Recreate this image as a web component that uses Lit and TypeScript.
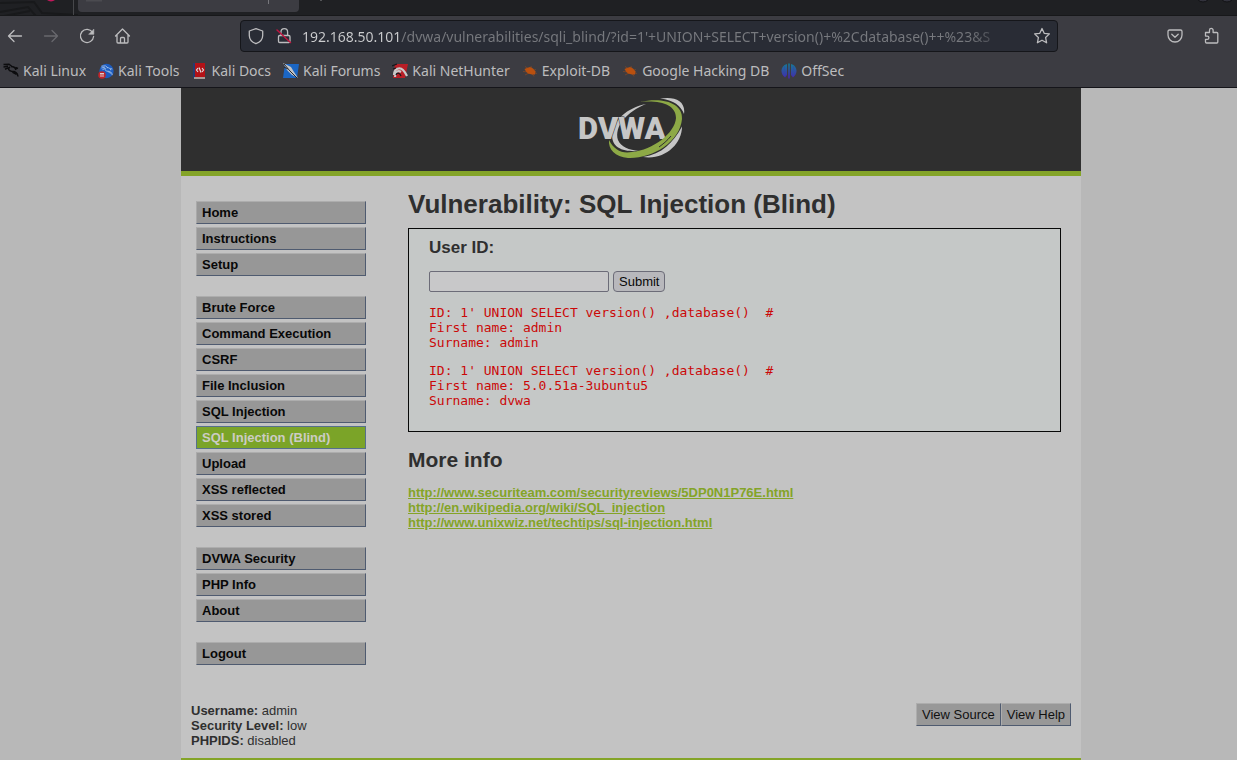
import { LitElement, html, css, svg } from "lit";
import { customElement, property } from "lit/decorators.js";

const dragon = svg`<path d="M0.500 1.500 6 1.200 9 3.500M0.500 4 5 3.200M2 6.200 5.500 4.600M7 4C4.500 5.500 5.500 8 8.500 8.200 12 8.200 14.500 9.500 15 13.500M8 3.500c3 0 4.500 1 5 3.500M12.500 4.500l2.500 1M9 8.300c1 2 3.500 1.700 4.500 3.200"/>`;

const bug = svg`<path d="M2.500 6 5 5l3-1 3 1.500 2.500 3L13 11.500 10 11.500 6 10.500 4 8.500Z" fill="#b9500f"/><path d="M3 3.500 7 6M1 8.500l5 .5M3 12l4-2M9 3l1 4M14 6.500l-4 1M15 10.500l-4-1M12 13.500l-2-3" stroke="#b9500f" stroke-width=".6" stroke-opacity=".7" fill="none"/>`;

const bookmarks = [
  { name: "Kali Linux", icon: svg`<g fill="none" stroke="#0c0c0e" stroke-width="1.500">${dragon}</g>` },
  {
    name: "Kali Tools",
    icon: svg`<circle cx="8.500" cy="8" r="7.200" fill="#1c5cc0"/><g fill="none" stroke="#a9c3e6" stroke-width="1.200" transform="translate(3 2) scale(.75)">${dragon}</g><circle cx="4" cy="12" r="3.800" fill="#c0252b"/><path d="M2 10.500h4M3 10.500v3.500M5 10.500v3.500" stroke="#ddd" stroke-width=".9" fill="none"/>`,
  },
  {
    name: "Kali Docs",
    icon: svg`<path d="M2 0h11v14H2z" fill="#b31217"/><path d="M1 0h2v15H1z" fill="#263c70"/><path d="M2 14h11v2H2z" fill="#a89a96"/><path d="M6 5 4.500 7 6 9M10 5l1.500 2L10 9M7 4.500l2 5" stroke="#ddd" stroke-width="1.200" fill="none"/>`,
  },
  {
    name: "Kali Forums",
    icon: svg`<path d="M2 1h14l-2 14H0Z" fill="#1b66c4"/><path d="M0 0 8 4l3 5 4 6-6-3-5-5Z" fill="#c3c5c8"/><path d="m1 1 6 7 7 7M1 4l4 2" stroke="#24262c" fill="none"/>`,
  },
  {
    name: "Kali NetHunter",
    icon: svg`<path d="M3 1h13l-3 14H1Z" fill="#b81e26"/><path d="M2 12C2 5 8 4 11 7c2 2 3 4 4 6M3 14c0-5 3-7 6-5" stroke="#c9c9c9" stroke-width="2.200" fill="none"/><path d="M0 3 5 1M1 6l3-1M4 12c1-3 4-2 5 1" stroke="#15161a" stroke-width="1.200" fill="none"/>`,
  },
  { name: "Exploit-DB", icon: bug },
  { name: "Google Hacking DB", icon: bug },
  {
    name: "OffSec",
    icon: svg`<defs><linearGradient id="os" gradientUnits="userSpaceOnUse" x1="0" y1="0" x2="0" y2="16"><stop offset="0" stop-color="#127f93"/><stop offset="1" stop-color="#4a1fb0"/></linearGradient></defs><path d="M6 1C-1 3-1 11 4 14.500L6 12ZM10 1c7 2 7 10 2 13.500L10 12ZM7.200.500h1.600v15H7.200Z" fill="url(#os)"/><path d="M3.500 3v10M12.500 3v10" stroke="#2d4ba5" stroke-width=".6"/>`,
  },
];

const menu = [
  ["Home", "Instructions", "Setup"],
  ["Brute Force", "Command Execution", "CSRF", "File Inclusion", "SQL Injection", "SQL Injection (Blind)", "Upload", "XSS reflected", "XSS stored"],
  ["DVWA Security", "PHP Info", "About"],
  ["Logout"],
];

@customElement("browser-chrome")
class BrowserChrome extends LitElement {
  static styles = css`
    :host { display: block; background: #3c3c42; color: #bcbcbe; font: 14px/20px "Noto Sans", sans-serif; border-bottom: 1px solid #15151a; }
    * { box-sizing: border-box; }
    svg { display: block; flex: none; }
    button { padding: 0; border: 0; background: none; color: inherit; font: inherit; }
    .tabs { height: 16px; display: flex; background: #1f2023; border-bottom: 1px solid #17181a; overflow: hidden; }
    .art { width: 78px; height: 16px; }
    .tab { width: 221px; height: 12px; border-radius: 0 0 4px 4px; background: #3c3c42; }
    .rest { width: 120px; height: 16px; }
    .winbtns { margin-left: auto; width: 50px; height: 16px; }
    .bar { display: flex; align-items: center; padding: 4px 17px 4px 6px; }
    .nav { display: flex; gap: 18px; flex: none; width: 234px; }
    .dim { color: #68686d; }
    .url { display: flex; align-items: center; flex: 0 1 818px; min-width: 0; height: 32px; padding: 0 6px; border: 1px solid #15161a; border-radius: 4px; background: #292c35; }
    .url svg { margin-right: 10px; }
    .url .star svg { margin: 0; }
    .url input {
      flex: 1; min-width: 0; height: 24px; margin: 0 6px 0 -1px; padding: 0; border: 0; outline: 0; font: inherit; color: transparent;
      background: linear-gradient(to right, #cccdcf 99px, #77797e 99px, #77797e calc(100% - 60px), transparent calc(100% - 16px));
      -webkit-background-clip: text; background-clip: text;
    }
    .tools { display: flex; gap: 18px; margin-left: auto; }
    .marks { display: flex; gap: 12px; padding: 5px 3px 6px; }
    .marks a { display: flex; align-items: center; gap: 4px; color: inherit; text-decoration: none; white-space: nowrap; }
    .line { fill: none; stroke: currentColor; stroke-width: 1.300; stroke-linecap: round; stroke-linejoin: round; }
  `;

  render() {
    const icon = (body: unknown) => html`<svg class="line" width="18" height="18" viewBox="0 0 18 18" aria-hidden="true">${body}</svg>`;
    return html`
      <div class="tabs">
        <svg class="art" viewBox="0 0 78 16"><path d="M0 3 34 2 42 13 78 15M0 12 28 7 36 16M4 16l26-5" stroke="#18191b" stroke-width="2" fill="none"/><circle cx="51" cy="-4.500" r="6" fill="#c2185b"/><path d="M73.500 0v16" stroke="#46474a"/></svg>
        <svg class="tab" viewBox="0 0 221 12"><path d="M8 0h16v1.500H8z" fill="#4b4b50"/><path d="M190.500 0v4" stroke="#77777c"/></svg>
        <svg class="rest" viewBox="0 0 120 16"><path d="M22 0v1" stroke="#88888c"/></svg>
        <svg class="winbtns" viewBox="0 0 50 16"><g fill="#32323c" stroke="#121215"><circle cx="16" cy="-5" r="7"/><circle cx="40" cy="-5" r="7"/></g></svg>
      </div>
      <div class="bar">
        <div class="nav">
          <button aria-label="Back">${icon(svg`<path d="M15.500 9H2.500M8 3.500 2.500 9 8 14.500"/>`)}</button>
          <button class="dim" aria-label="Forward">${icon(svg`<path d="M2.500 9h13M10 3.500 15.500 9 10 14.500"/>`)}</button>
          <button aria-label="Reload">${icon(svg`<path d="M14.500 5.200A6.600 6.600 0 1 0 15.600 9.500"/><path d="M15.800 2.500v4.800H11Z" fill="currentColor" stroke-width=".6"/>`)}</button>
          <button aria-label="Home">${icon(svg`<path d="M1.500 9 8.500 2l7 7M3 7.800v7.200q0 1 1 1h9q1 0 1-1V7.800M6.500 16v-4.500q0-1 1-1h2q1 0 1 1V16"/>`)}</button>
        </div>
        <div class="url">
          ${icon(svg`<path d="M9 1.600 15.700 4v4.500c0 4-3 6.800-6.700 8.200-3.700-1.400-6.700-4.200-6.700-8.200V4Z"/>`)}
          ${icon(svg`<path d="M6 8V5a3.300 3.300 0 0 1 6.600 0v3M4.700 8.500h9.100q1.200 0 1.200 1.200v4.600q0 1.200-1.200 1.200H4.700q-1.200 0-1.200-1.200V9.700q0-1.200 1.200-1.200Z"/><path d="M2 3 15.500 15.500" stroke="#c0143f" stroke-width="1.500"/>`)}
          <input aria-label="Address" value="192.168.50.101/dvwa/vulnerabilities/sqli_blind/?id=1'+UNION+SELECT+version()+%2Cdatabase()++%23&amp;S" />
          <button class="star" aria-label="Bookmark this page">${icon(svg`<path d="m9 1.500 2.200 4.800 5.200.6-3.800 3.600 1 5.300L9 13.200l-4.600 2.600 1-5.300L1.600 6.900l5.200-.6Z"/>`)}</button>
        </div>
        <div class="tools">
          <button aria-label="Save to Pocket">${icon(svg`<path d="M3.500 3h11q1.500 0 1.500 1.500V8a7 7 0 0 1-14 0V4.500Q2 3 3.500 3ZM5.800 7.200 9 10.300l3.200-3.100"/>`)}</button>
          <button aria-label="Extensions">${icon(svg`<path d="M3.500 5.500h4V3.200a1.800 1.800 0 0 1 3.600 0v2.300h3.700q1 0 1 1v8.500q0 1-1 1H4.500q-1 0-1-1V12.300h1.800a1.600 1.600 0 0 0 0-3.200H3.500Z"/>`)}</button>
        </div>
      </div>
      <nav class="marks" aria-label="Bookmarks">
        ${bookmarks.map((b) => html`<a href="#"><svg width="16" height="16" viewBox="0 0 16 16" aria-hidden="true">${b.icon}</svg>${b.name}</a>`)}
      </nav>
    `;
  }
}

@customElement("side-menu")
class SideMenu extends LitElement {
  @property() current = "";
  static styles = css`
    :host { display: block; width: 170px; }
    nav, ul { display: flex; flex-direction: column; }
    nav { gap: 20px; }
    ul { gap: 3px; margin: 0; padding: 0; list-style: none; }
    a { display: block; padding: 3px 5px; border: 1px solid; border-color: #adadad #4f5b70 #4f5b70 #a9a9a9; background: #979797; color: #080808; font: bold 13px/15px "Liberation Sans", Arial, sans-serif; text-decoration: none; }
    .current { background: #7ba428; border-color: #56708c; color: #ccccc4; }
  `;
  render() {
    return html`<nav>
      ${menu.map((g) => html`<ul>${g.map((n) => html`<li><a href="#" class=${n === this.current ? "current" : ""}>${n}</a></li>`)}</ul>`)}
    </nav>`;
  }
}

@customElement("app-root")
class AppRoot extends LitElement {
  static styles = css`
    :host { display: flex; flex-direction: column; min-height: 100vh; background: #b8b8b8; color: #2f2f2f; font: 13px/15px "Liberation Sans", Arial, sans-serif; }
    * { box-sizing: border-box; }
    .viewport { flex: 1; display: flex; justify-content: center; padding-left: 25px; }
    .page { width: 900px; display: flex; flex-direction: column; background: #c3c3c3; }
    header { display: flex; justify-content: center; padding: 8px 0 11px; background: #2f2f2f; border-bottom: 5px solid #84a428; }
    header svg { display: block; }
    .logo { font: 900 31px Roboto, sans-serif; fill: #c6c6c6; stroke: #2f2f2f; stroke-width: 1px; paint-order: stroke; }
    .body { display: flex; gap: 42px; padding: 10px 20px 38px 15px; }
    side-menu { flex: none; margin-top: 15px; }
    main { flex: 1; min-width: 0; }
    h1 { margin: 3px 0 9px; font-size: 26px; line-height: 30px; }
    h2 { margin: 0 0 13px; font-size: 21px; line-height: 24px; }
    h3 { margin: 0 0 14px; font-size: 17px; line-height: 19px; }
    .panel { margin-bottom: 16px; padding: 9px 20px 23px; border: 1px solid #080808; background: #c5c8c7; }
    form { display: flex; gap: 4px; margin-bottom: 13px; }
    input { width: 180px; height: 21px; padding: 1px 2px; border: 1px solid #6c6c78; border-radius: 2px; background: #c8c8c9; font: inherit; }
    form button { height: 21px; padding: 0 5px; border: 1px solid #6c6c78; border-radius: 4px; background: #b8b8bc; color: #080808; font: inherit; }
    pre { margin: 0 0 13px; color: #cb0808; font: 13px/15px "DejaVu Sans Mono", monospace; }
    pre:last-child { margin: 0; }
    .links { margin: 0; padding: 0; list-style: none; font-weight: bold; }
    .links a { color: #84a428; }
    .status { display: flex; justify-content: space-between; align-items: flex-start; padding: 0 10px 10px; }
    .status p { margin: 0; }
    .actions { display: flex; }
    .actions button { height: 23px; padding: 0 5px; border: 1px solid; border-color: #adadad #4f5b70 #4f5b70 #adadad; background: #989898; color: #111; font: inherit; }
    footer { flex: 1; border-top: 2px solid #84a428; background: #b8b8b8; }
  `;

  render() {
    return html`
      <browser-chrome></browser-chrome>
      <div class="viewport">
        <div class="page">
          <header>
            <svg width="108" height="64" viewBox="0 0 108 64" role="img" aria-label="DVWA">
              <path d="M69 8C50 12 36 24 35 39c0 13 11 17 27 16-10-1-18-4-21-11C37 30 50 16 69 8Z" fill="#c6c6c6"/>
              <path d="M83 2.500C98 0 109 5 107 18 104 10 97 4 83 2.500ZM105 30.500c0 18-18 34-39 30.500 19-3 30-14 39-30.500Z" fill="#c6c6c6"/>
              <text class="logo" x="1" y="43">DVWA</text>
              <path d="M63 6c23-5 43 1 42 17C103 46 75 63 51 62 38 61 31 53 32 44c5 10 13 14 23 12C76 54 98 37 99 22 99 9 84 4 63 6Z" fill="#8da946"/>
              <path d="M94 40C90 45 86 48 82 51" stroke="#2f2f2f" fill="none"/>
            </svg>
          </header>
          <div class="body">
            <side-menu current="SQL Injection (Blind)"></side-menu>
            <main>
              <h1>Vulnerability: SQL Injection (Blind)</h1>
              <section class="panel">
                <h3><label for="uid">User ID:</label></h3>
                <form @submit=${(e: Event) => e.preventDefault()}>
                  <input id="uid" type="text" /><button type="submit">Submit</button>
                </form>
                <pre>${"ID: 1' UNION SELECT version() ,database()  #\nFirst name: admin\nSurname: admin"}</pre>
                <pre>${"ID: 1' UNION SELECT version() ,database()  #\nFirst name: 5.0.51a-3ubuntu5\nSurname: dvwa"}</pre>
              </section>
              <h2>More info</h2>
              <ul class="links">
                ${["http://www.securiteam.com/securityreviews/5DP0N1P76E.html", "http://en.wikipedia.org/wiki/SQL_injection", "http://www.unixwiz.net/techtips/sql-injection.html"].map((u) => html`<li><a href=${u}>${u}</a></li>`)}
              </ul>
            </main>
          </div>
          <div class="status">
            <p><b>Username:</b> admin<br /><b>Security Level:</b> low<br /><b>PHPIDS:</b> disabled</p>
            <div class="actions"><button>View Source</button><button>View Help</button></div>
          </div>
          <footer></footer>
        </div>
      </div>
    `;
  }
}
